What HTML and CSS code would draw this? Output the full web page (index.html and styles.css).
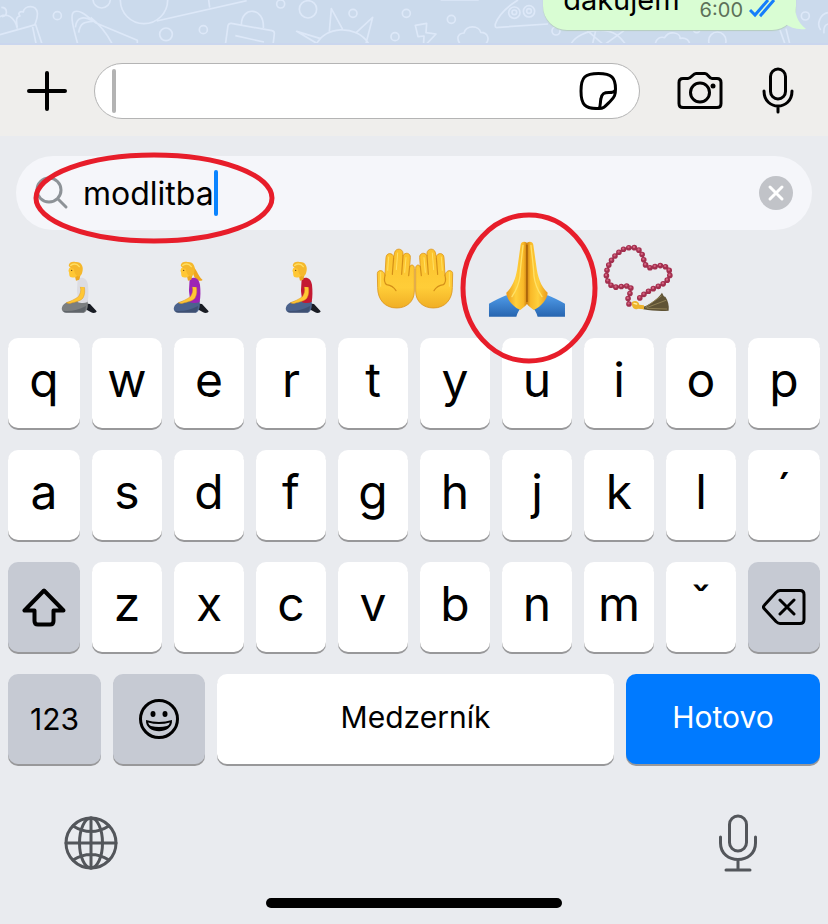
FILE: index.html
```html
<!DOCTYPE html>
<html lang="sk">
<head>
<meta charset="utf-8">
<meta name="viewport" content="width=device-width, initial-scale=1">
<title>Chat</title>
<link rel="stylesheet" href="styles.css">
</head>
<body>
<main class="screen">
  <section class="chat">
    <svg class="doodles" viewBox="0 0 2484 135" preserveAspectRatio="xMinYMin slice" aria-hidden="true">
      <circle cx="172" cy="47" r="12"/><circle cx="305" cy="-2" r="26"/><circle cx="432" cy="0" r="71"/>
      <circle cx="498" cy="103" r="19"/><circle cx="610" cy="89" r="12"/><circle cx="842" cy="12" r="12"/>
      <circle cx="924" cy="28" r="26"/><circle cx="1059" cy="40" r="12"/><circle cx="1185" cy="110" r="12"/><circle cx="1219" cy="40" r="12"/>
      <path d="M470 63 740 2M626 0l3 23M0 104l107-30 20 61M97 77l12 58M52 82C48 60 48 50 60 48 52 40 60 32 70 36c2-20 38-24 42 2 2 20-6 28-8 38M0 50c20-12 44 0 52 36M4 22c20 0 20 28 2 28"/>
      <path d="M234 135c-14-50-24-88-14-98 20-14 50 20 68 32l124 52v14M226 82c4-36 30-32 54-18M236 98c4-30 18-32 42-34M272 52c30 24 52 54 66 83"/>
      <path d="M676 135l8-58q2-8 10-7l122 22q8 2 7 10l-4 33M724 74c0-56 70-54 66 10M706 107l86 19"/>
      <path d="M948 135c24-56 120-64 158-4M950 130l-60-36 72 22M988 94l6-68 34 62M1066 100l52-48-20 78M865 135h60"/>
      <g transform="translate(1242)">
        <path d="M80 0h114M312 0c-32 20-58 44-68 72-2 12 4 12 10 10l148-10M4 76l34-6-2 28 30 4-38 40 2-34-18 2ZM140 135c-14-20-10-34 10-36 8-26 46-22 50-2 22 0 30 22 12 38M470 135c10-26 50-44 90-44s60 20 76 44M520 92l50 43 60-43M545 92l-10 43M724 135c0-20 16-26 28-22 14-24 48-14 46 2 20-4 28 8 30 20M1098 90l16 45M1116 86l12 49M1220 90c-14-20 0-48 22-52M1230 100c-2-20 4-26 12-28"/>
        <circle cx="301" cy="38" r="17"/><circle cx="345" cy="34" r="17"/><circle cx="301" cy="37" r="7"/><circle cx="345" cy="33" r="7"/>
        <circle cx="112" cy="58" r="12"/><circle cx="426" cy="93" r="12"/><circle cx="1174" cy="48" r="12"/><circle cx="910" cy="122" r="26"/><circle cx="848" cy="88" r="10"/>
      </g>
    </svg>
    <div class="bubble">
      <span class="message">dakujem</span>
      <time class="time">6:00</time>
      <svg class="checks" viewBox="0 0 27 20" role="img" aria-label="Prečítané"><path d="M1 12l5 5L19 2M11 16l1 1L25 2"/></svg>
      <svg class="tail" viewBox="0 0 22 30" aria-hidden="true"><path d="M0 0h10c1 14 3 22 12 29-9 1-15-1-22-6Z"/></svg>
    </div>
  </section>

  <form class="composer">
    <button class="icon-button" type="button" aria-label="Pridať">
      <svg class="line-icon bold" width="42" height="42" viewBox="0 0 42 42"><path d="M21 3v36M3 21h36"/></svg>
    </button>
    <div class="message-field">
      <span class="caret caret-idle"></span>
      <input class="message-input" type="text" aria-label="Správa">
      <button class="icon-button" type="button" aria-label="Nálepky">
        <svg class="line-icon" width="38" height="38" viewBox="0 0 38 38"><path d="M20 36.500C6 37 2 33 2 19S6 1.500 19.500 1.500 36.500 6 36.500 17c0 6-1 8-5 12-5 5-6.500 7.500-11.500 7.500ZM20 36.500c2-3 1-7 2-10 1-5 3-6 8-6 3 0 5 0 6-2"/></svg>
      </button>
    </div>
    <div class="composer-actions">
      <button class="icon-button" type="button" aria-label="Fotoaparát">
        <svg class="line-icon" width="46" height="38" viewBox="0 0 46 38"><path d="M6 6.500h5c3 0 5-5 8-5h9c3 0 4 5 7 5h5q4 0 4 4v21q0 4-4 4H6q-4 0-4-4v-21q0-4 4-4Z"/><circle cx="23" cy="20.500" r="9.500"/><circle class="dot" cx="36" cy="14" r="2.500"/></svg>
      </button>
      <button class="icon-button" type="button" aria-label="Hlasová správa">
        <svg class="line-icon" width="32" height="48" viewBox="0 0 32 48"><rect x="8.500" y="2" width="15" height="30" rx="7.500"/><path d="M2 24c0 20 28 20 28 0M16 39v6"/></svg>
      </button>
    </div>
  </form>

  <section class="keyboard">
    <div class="search">
      <svg class="search-icon" width="34" height="34" viewBox="0 0 34 34" aria-hidden="true"><circle cx="14" cy="14" r="12"/><path d="M23 23l8 8"/></svg>
      <input class="search-input" type="text" size="8" value="modlitba" aria-label="Hľadať emoji">
      <span class="caret"></span>
      <button class="clear" type="button" aria-label="Vymazať">
        <svg width="34" height="34" viewBox="0 0 34 34"><circle cx="17" cy="17" r="17"/><path d="M11 11l12 12M23 11 11 23"/></svg>
      </button>
      <svg class="mark mark-search" viewBox="0 0 242 92" aria-hidden="true"><ellipse cx="121" cy="46" rx="118" ry="43"/></svg>
    </div>

    <div class="emoji-row">
      <button class="emoji" type="button" aria-label="Kľačiaca osoba">
        <svg viewBox="0 0 112 108"><use href="#kneeler"/></svg>
      </button>
      <button class="emoji woman" type="button" aria-label="Kľačiaca žena">
        <svg viewBox="0 0 112 108"><g transform="translate(17 10) scale(.3333)"><path fill="#f0a51e" d="M118 76c18 10 16 28 34 44-12 8-26-4-28-18l-10-12Z"/></g><use href="#kneeler"/></svg>
      </button>
      <button class="emoji man" type="button" aria-label="Kľačiaci muž">
        <svg viewBox="0 0 112 108"><use href="#kneeler"/></svg>
      </button>
      <button class="emoji" type="button" aria-label="Dlane spolu nahor">
        <svg viewBox="0 0 112 108">
          <defs>
            <linearGradient id="skin" x1="0" y1="0" x2="0" y2="1"><stop offset="0" stop-color="#fbc22d"/><stop offset=".65" stop-color="#ffcd38"/><stop offset="1" stop-color="#f0ae25"/></linearGradient>
            <g id="palm">
              <path fill="url(#skin)" stroke="#dc951c" stroke-width="2.500" d="M75 121 78 68c1-16 20-16 23-2l3-14c4-14 24-12 25 2v8c6-12 23-8 22 5l-2 28c4-8 14-6 14 5V168C163 200 140 219 110 219 75 219 53 194 53 158L52 116c0-13 20-13 23 5Z"/>
              <path fill="none" stroke="#d48f18" stroke-width="3.500" stroke-linecap="round" d="M101 68l-4 50M129 62l-4 56M149 94l-3 28M75 121c-3 12-3 22 5 28 12 2 22 8 28 18"/>
              <path fill="none" stroke="#ffe065" stroke-width="3" stroke-linecap="round" d="M86 66l-3 40M113 54l-4 50M138 68l-4 44M62 112v42"/>
            </g>
          </defs>
          <g transform="translate(1 5) scale(.3333)"><use href="#palm"/><use href="#palm" transform="translate(330) scale(-1 1)"/></g>
        </svg>
      </button>
      <button class="emoji" type="button" aria-label="Zopnuté ruky">
        <svg viewBox="0 0 112 108">
          <defs>
            <linearGradient id="sleeve" x1="0" y1="0" x2="0" y2="1"><stop offset="0" stop-color="#4f9be8"/><stop offset="1" stop-color="#2765b0"/></linearGradient>
            <linearGradient id="hand" x1="0" y1="0" x2="1" y2="0"><stop offset="0" stop-color="#e99a1c"/><stop offset=".45" stop-color="#ffd03c"/><stop offset=".8" stop-color="#f9b928"/><stop offset="1" stop-color="#c97a10"/></linearGradient>
            <g id="praying">
              <path fill="url(#sleeve)" d="M417 311c18-10 36-18 52-25 14 8 38 22 48 34-8 6-15 18-18 30h-82Z"/>
              <path fill="url(#hand)" d="M533 132c-4-10-20-9-21 2l-9 64c-4 30-12 60-34 80 0 16 18 42 42 52 12-10 20-16 22-22Z"/>
              <path fill="none" stroke="#ffe167" stroke-width="4" stroke-linecap="round" d="M519 136c-3 32-8 64-9 92-3 26-12 44-24 62"/>
            </g>
          </defs>
          <g transform="translate(-121 -30) scale(.3333)"><use href="#praying"/><use href="#praying" transform="translate(1062) scale(-1 1)"/><path d="M531 134v172" fill="none" stroke="#9e5b08" stroke-width="4"/></g>
        </svg>
        <svg class="mark mark-emoji" viewBox="0 0 138 152" aria-hidden="true"><ellipse cx="69" cy="76" rx="66" ry="73"/></svg>
      </button>
      <button class="emoji" type="button" aria-label="Ruženec">
        <svg viewBox="0 0 112 108">
          <defs><path id="string" d="M837 312l-3-18 7-16 2-17-17-4-18 4-16 1-13-9-7-13-3-14 2-15 5-15 7-13 10-13 12-12 15-10 18-5h20l12 10 8 13 4 16 6 16 16 7 16-7 18-2 16 8 8 16-6 16-12 13-14 8-16 7-16 8-16 11-15 13"/></defs>
          <g transform="translate(-233 -30) scale(.3333)" fill="none" stroke-linecap="round">
            <use href="#string" stroke="#6e2940" stroke-width="4"/>
            <use href="#string" stroke="#a3304f" stroke-width="17" stroke-dasharray="0 16.500"/>
            <use href="#string" stroke="#d4617f" stroke-width="7" stroke-dasharray="0 16.500" transform="translate(-1 -2)"/>
            <path fill="#5f5335" d="M880 320c24-8 44-24 56-42 4 6 4 12 10 12 8 12 12 26 10 42-26 2-52 0-76-4Z"/>
            <path stroke="#8f8054" stroke-width="3" d="M886 322l48-34M890 323l58-22M892 325l58 2"/>
            <path fill="#edb32c" d="M846 306c10-6 20-2 22 8l14 2v12l-18-2c-12 6-20-6-18-20Z"/>
            <path stroke="#fff0a0" stroke-width="4" d="M852 310l8 2"/>
          </g>
        </svg>
      </button>
    </div>

    <div class="keys">
      <div class="key-row">
        <button class="key">q</button><button class="key">w</button><button class="key">e</button><button class="key">r</button><button class="key">t</button><button class="key">y</button><button class="key">u</button><button class="key">i</button><button class="key">o</button><button class="key">p</button>
      </div>
      <div class="key-row">
        <button class="key">a</button><button class="key">s</button><button class="key">d</button><button class="key">f</button><button class="key">g</button><button class="key">h</button><button class="key">j</button><button class="key">k</button><button class="key">l</button><button class="key">´</button>
      </div>
      <div class="key-row">
        <button class="key special" aria-label="Shift">
          <svg class="line-icon bold" width="44" height="40" viewBox="0 0 44 40"><path d="M22 3.500 2.500 23.500H12.500V34q0 3.500 3.500 3.500H28q3.500 0 3.500-3.500V23.500H41.500Z"/></svg>
        </button>
        <button class="key">z</button><button class="key">x</button><button class="key">c</button><button class="key">v</button><button class="key">b</button><button class="key">n</button><button class="key">m</button><button class="key">ˇ</button>
        <button class="key special" aria-label="Vymazať znak">
          <svg class="line-icon" width="44" height="40" viewBox="0 0 44 40"><path d="M18 3.500H38q4 0 4 4v25q0 4-4 4H18q-2 0-4-2L2.500 22q-2-2 0-4L14 5.500q2-2 4-2ZM18 13l14 14M32 13 18 27"/></svg>
        </button>
      </div>
      <div class="key-row function-row">
        <button class="key special label">123</button>
        <button class="key special" aria-label="Emoji">
          <svg class="line-icon" width="42" height="42" viewBox="0 0 42 42"><circle cx="21" cy="21" r="18.500"/><ellipse class="dot" cx="15" cy="16" rx="2.500" ry="3"/><ellipse class="dot" cx="27" cy="16" rx="2.500" ry="3"/><path class="dot" d="M8 22q13 4 26 0c1 15-27 15-26 0Z"/><path class="teeth" d="M10 24.500q11 3 22 0-1 3-3 3.500-8 2-16 0-2-.5-3-3.500Z"/></svg>
        </button>
        <button class="key label">Medzerník</button>
        <button class="key done label">Hotovo</button>
      </div>
    </div>

    <div class="dock">
      <button class="icon-button" type="button" aria-label="Zmeniť klávesnicu">
        <svg class="line-icon grey" width="54" height="54" viewBox="0 0 54 54"><circle cx="27" cy="27" r="25"/><ellipse cx="27" cy="27" rx="11.500" ry="25"/><path d="M27 2v50M2 27h50M9 10q18 11 36 0M9 44q18-11 36 0"/></svg>
      </button>
      <button class="icon-button" type="button" aria-label="Diktovanie">
        <svg class="line-icon grey" width="40" height="58" viewBox="0 0 40 58"><rect x="11.500" y="2" width="17" height="35" rx="8.500"/><path d="M2.500 23v6c0 22 35 22 35 0v-6M20 46v9M8 56h24"/></svg>
      </button>
    </div>
    <div class="home-indicator"></div>
  </section>
</main>

<svg class="symbols" width="0" height="0" aria-hidden="true">
  <defs>
    <g id="kneeler">
      <g transform="translate(17 10) scale(.3333)">
        <path fill="#191c24" d="M132 190l18 2 20 22c-2 6-12 6-18 2l-22-12Z"/>
        <path class="trousers" d="M142 180c4 18 0 34-10 38H78c-18-2-16-22 0-30 16-6 40-8 64-8Z"/>
        <path fill="#1b2433" opacity=".28" d="M70 212c22 3 44-2 68-14-1 12-4 18-8 20H78c-5 0-7-2-8-6Z"/>
        <path class="shirt" d="M113 116c16-8 28 0 31 18 2 18 2 36-1 52-10 5-22 4-30 0 2-16-2-24-2-36Z"/>
        <path fill="#eda722" d="M104 105l17 2-3 12-10 3Z"/>
        <path fill="#ffc735" d="M88 84c-2 6-4 10-1 12l1 10c1 8 12 8 20 4 10-4 16-18 12-30Z"/>
        <path fill="#f5b82c" d="M86 76c2-10 12-12 20-10 18-2 26 14 21 30-1 8-6 14-12 14-8-4-12-12-14-24-6 0-12-2-15-10Z"/>
        <path fill="none" stroke="#ffdf62" stroke-width="4" stroke-linecap="round" d="M92 76c10-6 20-4 26 4"/>
        <circle cx="95" cy="91" r="2" fill="#5a3510"/>
        <path fill="#ffc735" stroke="#df981d" stroke-width="1.500" d="M121 140c4 14-2 24-6 30-10 8-24 14-36 18 6 4 14 2 18 0 12-2 26-6 32-14 6-10 6-24 4-34Z"/>
        <path class="shirt" d="M119 118c12-6 20 4 18 24l-18-2Z"/>
      </g>
    </g>
  </defs>
</svg>
</body>
</html>
```
FILE: styles.css
```css
* {
  box-sizing: border-box;
}

body {
  margin: 0;
  background: #e9ebef;
  color: #000;
  font-family: Inter, "Liberation Sans", sans-serif;
}

button,
input {
  margin: 0;
  padding: 0;
  border: 0;
  background: none;
  color: inherit;
  font: inherit;
  outline: 0;
}

svg {
  display: block;
}

.screen {
  display: flex;
  flex-direction: column;
  min-height: 100vh;
}

/* Chat */
.chat {
  position: relative;
  display: flex;
  justify-content: flex-end;
  align-items: flex-end;
  height: 45px;
  padding: 0 32px 15px 0;
  overflow: hidden;
  background: #cbdaec;
  border-bottom: 2px solid #cad6ee;
}

.doodles {
  position: absolute;
  inset: 0;
  width: 100%;
  height: 45px;
  fill: none;
  stroke: #dde8f8;
  stroke-width: 5;
  stroke-linejoin: round;
}

.bubble {
  position: relative;
  display: flex;
  align-items: flex-end;
  height: 72px;
  margin-bottom: -2px;
  padding: 0 20px 8px;
  border-radius: 24px;
  background: #d9fdd3;
  box-shadow: 0 1px 1px #b5cdbf;
}

.message {
  padding-bottom: 6px;
  font-size: 29px;
  line-height: 32px;
}

.time {
  margin-left: 20px;
  color: #5d7159;
  font-size: 20px;
  line-height: 24px;
}

.checks {
  width: 27px;
  height: 20px;
  margin: 0 0 4px 6px;
  fill: none;
  stroke: #157efb;
  stroke-width: 3;
}

.tail {
  position: absolute;
  right: -10px;
  bottom: 0;
  width: 22px;
  height: 30px;
  fill: #d9fdd3;
}

/* Composer */
.composer {
  display: flex;
  align-items: center;
  height: 91px;
  padding: 1px 34px 0 26px;
  background: #efeeec;
}

.icon-button {
  display: flex;
  flex: none;
}

.line-icon {
  fill: none;
  stroke: #000;
  stroke-width: 3;
  stroke-linecap: round;
  stroke-linejoin: round;
}

.line-icon.bold {
  stroke-width: 4;
}

.line-icon.grey {
  stroke: #53565b;
}

.line-icon .dot {
  fill: #000;
  stroke: none;
}

.line-icon .teeth {
  fill: #c6cad3;
  stroke: none;
}

.message-field {
  display: flex;
  flex: 1;
  align-items: center;
  min-width: 0;
  height: 56px;
  margin-left: 26px;
  padding: 0 22px 0 17px;
  border: 1px solid #b4b4b4;
  border-radius: 28px;
  background: #fff;
}

.message-input {
  flex: 1;
  min-width: 0;
  height: 44px;
  font-size: 32px;
}

.caret {
  flex: none;
  width: 4px;
  height: 46px;
  border-radius: 2px;
  background: #0a84ff;
}

.caret-idle {
  height: 44px;
  background: #b3b3b3;
}

.composer-actions {
  display: flex;
  align-items: center;
  gap: 39px;
  margin-left: 37px;
}

/* Emoji search */
.keyboard {
  display: flex;
  flex: 1;
  flex-direction: column;
  padding-top: 20px;
}

.search {
  position: relative;
  display: flex;
  align-items: center;
  height: 74px;
  margin: 0 16px;
  padding: 0 19px;
  border-radius: 37px;
  background: #f5f6fa;
}

.search-icon {
  flex: none;
  fill: none;
  stroke: #8d9297;
  stroke-width: 3;
  stroke-linecap: round;
}

.search-input {
  field-sizing: content;
  height: 48px;
  margin-left: 14px;
  font-size: 32px;
}

.clear {
  margin-left: auto;
}

.clear svg {
  fill: #c1c3c8;
  stroke: none;
}

.clear path {
  stroke: #fff;
  stroke-width: 3;
  stroke-linecap: round;
}

.emoji-row {
  display: flex;
  height: 108px;
  padding-left: 23px;
}

.emoji {
  --shirt: #dcdce2;
  --trousers: #7b7e80;
  position: relative;
  width: 112px;
  height: 108px;
}

.emoji.woman {
  --shirt: #9d25b5;
  --trousers: #4b628c;
}

.emoji.man {
  --shirt: #c41932;
  --trousers: #4b628c;
}

.shirt {
  fill: var(--shirt);
}

.trousers {
  fill: var(--trousers);
}

.mark {
  position: absolute;
  z-index: 1;
  fill: none;
  stroke: #e71d2a;
  stroke-width: 5;
  pointer-events: none;
}

.mark-search {
  top: -4px;
  left: 17px;
  width: 242px;
  height: 92px;
}

.mark-emoji {
  top: -18px;
  left: -11px;
  width: 138px;
  height: 152px;
}

/* Keys */
.keys {
  display: grid;
  gap: 22px;
  padding: 0 8px;
}

.key-row {
  display: grid;
  grid-template-columns: 72fr repeat(8, 70fr) 72fr;
  gap: 12px;
}

.function-row {
  grid-template-columns: 93fr 92fr 397fr 194fr;
}

.key {
  display: flex;
  align-items: center;
  justify-content: center;
  min-width: 0;
  height: 90px;
  padding-bottom: 6px;
  border-radius: 10px;
  background: #fff;
  box-shadow: 0 2px 0 #98989a;
  font-size: 48px;
  font-weight: 380;
  line-height: 56px;
}

.key.label {
  padding-bottom: 4px;
  font-size: 30px;
  font-weight: 400;
}

.key.special {
  padding-bottom: 0;
  background: #c6cad3;
}

.key.done {
  background: #007aff;
  color: #fff;
}

/* Bottom controls */
.dock {
  display: flex;
  align-items: center;
  justify-content: space-between;
  padding: 50px 70px 0 64px;
}

.home-indicator {
  width: 296px;
  height: 10px;
  margin: auto auto 16px;
  border-radius: 5px;
  background: #000;
}

.symbols {
  position: absolute;
}
```
